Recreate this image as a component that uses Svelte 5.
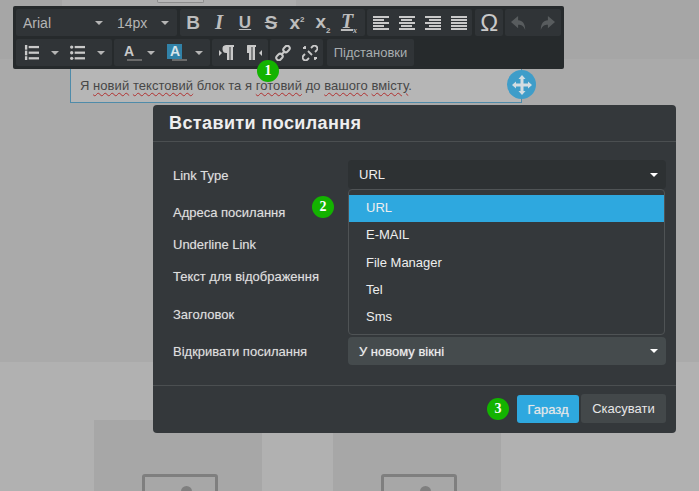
<script>
  const linkTypes = ['URL', 'E-MAIL', 'File Manager', 'Tel', 'Sms'];
  const labels = [
    ['Link Type', 30],
    ['Адреса посилання', 44],
    ['Underline Link', 20],
    ['Текст для відображення', 44],
    ['Заголовок', 32],
    ['Відкривати посилання', 42]
  ];
</script>

<div class="page">
  <section class="hero">
    <div class="topstrip">
      <div class="tophalf">
        <div class="topshot"></div>
      </div>
    </div>
    <div class="textblock">
      Я <u>новий</u> <u>текстовий</u> блок та я <u>готовий</u> до <u>вашого</u> <u>вмісту</u>.
    </div>
  </section>

  <section class="gallery">
    <div class="thumb"><span class="pic"><i></i></span></div>
    <div class="thumb"><span class="pic"><i></i></span></div>
  </section>

  <div class="toolbar">
    <div class="row">
      <div class="group">
        <span class="combo font">Arial<b class="caret"></b></span>
        <span class="combo size">14px<b class="caret"></b></span>
      </div>
      <div class="group tools">
        <span class="glyph bold">B</span>
        <span class="glyph ital">I</span>
        <span class="glyph under">U</span>
        <span class="glyph strike">S</span>
        <span class="glyph script">x<sup>2</sup></span>
        <span class="glyph script">x<sub>2</sub></span>
        <span class="glyph clear">T<sub>x</sub></span>
      </div>
      <div class="group aligns">
        {#each ['l', 'c', 'r', 'j'] as a}
          <span class="align {a}"><i></i><i></i><i></i><i></i><i></i></span>
        {/each}
      </div>
      <div class="group omega">Ω</div>
      <div class="group undo">
        <svg viewBox="0 0 20 18" width="18" height="16"><path d="M9 1 1 8l8 7v-4c4 0 6 1 8 6 0-7-3-11-8-11z" fill="#585c5e"/></svg>
        <svg viewBox="0 0 20 18" width="18" height="16"><path d="M11 1l8 7-8 7v-4c-4 0-6 1-8 6 0-7 3-11 8-11z" fill="#585c5e"/></svg>
      </div>
    </div>

    <div class="row low">
      <div class="group lists">
        <svg viewBox="0 0 16 16" width="15" height="15" fill="#c9c9c9"><rect x="5" y="1" width="11" height="2.4"/><rect x="5" y="7" width="11" height="2.4"/><rect x="5" y="13" width="11" height="2.4"/><rect x="1" y="0" width="2.5" height="5"/><rect x="1" y="6" width="2.5" height="5"/><rect x="1" y="12" width="2.5" height="4"/></svg>
        <b class="caret"></b>
        <svg viewBox="0 0 16 16" width="15" height="15" fill="#c9c9c9"><rect x="5" y="1" width="11" height="2.4"/><rect x="5" y="7" width="11" height="2.4"/><rect x="5" y="13" width="11" height="2.4"/><circle cx="1.8" cy="2.2" r="1.8"/><circle cx="1.8" cy="8.2" r="1.8"/><circle cx="1.8" cy="14.2" r="1.8"/></svg>
        <b class="caret"></b>
      </div>
      <div class="group colors">
        <span class="swatch">A</span>
        <b class="caret"></b>
        <span class="swatch blue">A</span>
        <b class="caret"></b>
      </div>
      <div class="group paras">
        <svg viewBox="0 0 15 15" width="15" height="15" fill="#c9c9c9"><path d="M0 5l3 3-3 3z"/><path d="M7 0h8v2h-1v13h-2.500V2h-1v13H8V8a4 4 0 0 1-1-8z"/></svg>
        <svg viewBox="0 0 15 15" width="15" height="15" fill="#c9c9c9"><path d="M1 0h8v2H8v13H5.500V2h-1v13H2V8a4 4 0 0 1-1-8z"/><path d="M15 5l-3 3 3 3z"/></svg>
      </div>
      <div class="group links">
        <svg viewBox="0 0 16 16" width="16" height="16" fill="none" stroke="#c9c9c9" stroke-width="2"><rect x="8" y="1.500" width="7" height="5" rx="2.500" transform="rotate(-45 11.500 4)"/><rect x="1" y="9.500" width="7" height="5" rx="2.500" transform="rotate(-45 4.500 12)"/><path d="M6 10l4-4"/></svg>
        <svg viewBox="0 0 16 16" width="16" height="16" fill="none" stroke="#c9c9c9" stroke-width="1.800"><path d="M9 3l1.500-1.500a2.500 2.500 0 0 1 4 4L13 7M7 13l-1.500 1.500a2.500 2.500 0 0 1-4-4L3 9M3 1v3M1 3h3M13 15v-3M15 13h-3M6 6l4 4"/></svg>
      </div>
      <div class="group subs">Підстановки</div>
    </div>
  </div>

  <div class="handle">
    <svg viewBox="0 0 20 20" width="20" height="20" fill="#d3dde2"><path d="M10 0l3.500 4H11.500v4.500H16V6.500l4 3.500-4 3.500v-2h-4.500V16h2L10 20l-3.500-4h2v-4.500H4v2L0 10l4-3.500v2h4.500V4h-2z"/></svg>
  </div>

  <div class="modal">
    <h3>Вставити посилання</h3>
    <div class="body">
      <div class="labels">
        {#each labels as [label, h]}
          <div class="lbl" style="height: {h}px">{label}</div>
        {/each}
      </div>
      <div class="controls">
        <div class="select dark">URL<b class="caret white"></b></div>
        <ul class="menu">
          {#each linkTypes as t, i}
            <li class:on={i === 0}>{t}</li>
          {/each}
        </ul>
        <div class="select open">У новому вікні<b class="caret white"></b></div>
      </div>
    </div>
    <div class="foot">
      <button class="ok">Гаразд</button>
      <button class="cancel">Скасувати</button>
    </div>
  </div>

  <span class="badge one">1</span>
  <span class="badge two">2</span>
  <span class="badge three">3</span>
</div>

<style>
  :global(body) {
    margin: 0;
    background: #b1b1b1;
  }

  .page {
    position: relative;
    width: 699px;
    height: 491px;
    overflow: hidden;
    font-family: "Liberation Sans", Arial, sans-serif;
    font-size: 13px;
  }

  .hero {
    height: 362px;
    background: #aaaaaa;
  }

  .topstrip {
    height: 59px;
    background: #a6a6a6;
  }

  .tophalf {
    width: 234px;
    height: 59px;
    margin-left: 62px;
    background: #adadad;
  }

  .topshot {
    width: 45px;
    height: 2px;
    margin-left: 95px;
    background: #b7b7b7;
    border: 1px solid #8c8c8c;
    border-top: 0;
    border-radius: 0 0 2px 2px;
  }

  .textblock {
    margin: 10px 0 0 70px;
    width: 452px;
    height: 34px;
    box-sizing: border-box;
    border: 1px solid #4f8ba9;
    border-top: 0;
    padding: 9px 9px 0;
    background: #b6b6b6;
    color: #474747;
    font-size: 13px;
    letter-spacing: 0.05px;
    line-height: 16px;
  }

  .textblock u {
    text-decoration: underline wavy #b03030 1px;
    text-underline-offset: 2px;
  }

  .gallery {
    display: flex;
    gap: 71px;
    padding: 58px 0 0 94px;
  }

  .thumb {
    width: 168px;
    height: 71px;
    background: #a7a7a7;
    display: flex;
    justify-content: center;
    padding-top: 54px;
    box-sizing: border-box;
  }

  .pic {
    width: 76px;
    height: 30px;
    margin-left: 3px;
    box-sizing: border-box;
    border: 3px solid #7f7f7f;
    border-radius: 3px;
    display: flex;
    justify-content: center;
  }

  .pic i {
    width: 11px;
    height: 11px;
    margin: 9px 0 0 14px;
    border-radius: 50%;
    background: #7f7f7f;
  }

  .toolbar {
    position: absolute;
    left: 13px;
    top: 6px;
    width: 551px;
    height: 63px;
    box-sizing: border-box;
    padding: 3px;
    background: #262a2c;
    border-radius: 2px;
    display: flex;
    flex-direction: column;
    gap: 3px;
    color: #c9c9c9;
  }

  .row {
    display: flex;
    gap: 2px;
    height: 27px;
  }

  .group {
    height: 27px;
    background: #303437;
    border-radius: 2px;
    display: flex;
    align-items: center;
  }

  .combo {
    display: flex;
    align-items: center;
    justify-content: space-between;
    font-size: 14px;
    box-sizing: border-box;
    padding-left: 7px;
    color: #b5b5b5;
  }

  .font { width: 94px; padding-right: 7px; }
  .size { width: 67px; padding-right: 8px; }

  .caret {
    display: block;
    flex: none;
    width: 0;
    height: 0;
    border: 4px solid transparent;
    border-top-color: #b5b5b5;
    border-bottom: 0;
  }

  .caret.white {
    border-top-color: #fff;
    border-width: 4px 4px 0;
  }

  .tools {
    width: 185px;
    margin-left: 1px;
  }

  .glyph {
    width: 26px;
    flex: none;
    text-align: center;
    font-size: 16px;
    font-weight: bold;
    color: #bdbdbd;
  }

  .bold { font-size: 19px; }
  .ital { font-family: "Liberation Serif", serif; font-style: italic; font-size: 21px; }
  .under { text-decoration: underline; font-size: 17px; }
  .strike { text-decoration: line-through; font-size: 19px; }
  .script { font-size: 19px; }
  .script sup, .script sub, .clear sub { font-size: 8px; }
  .clear { font-family: "Liberation Serif", serif; font-style: italic; font-size: 20px; text-decoration: underline; }

  .aligns {
    width: 106px;
    gap: 10px;
    padding-left: 6px;
    box-sizing: border-box;
  }

  .align {
    width: 16px;
    display: flex;
    flex-direction: column;
    gap: 1px;
  }

  .align i {
    display: block;
    height: 2px;
    background: #c9c9c9;
  }

  .align.l i:nth-child(even) { width: 70%; }
  .align.c i:nth-child(even) { width: 70%; align-self: center; }
  .align.r i:nth-child(even) { width: 70%; align-self: flex-end; }

  .omega {
    width: 28px;
    margin-left: 1px;
    justify-content: center;
    font-size: 24px;
  }

  .undo {
    width: 56px;
    justify-content: space-around;
  }

  .lists {
    width: 96px;
    box-sizing: border-box;
    padding: 0 7px 0 8px;
    justify-content: space-between;
  }

  .colors {
    width: 96px;
    box-sizing: border-box;
    padding-left: 9px;
  }

  .swatch {
    width: 21px;
    height: 17px;
    margin-right: 3px;
    font-size: 14px;
    font-weight: bold;
    line-height: 15px;
    text-indent: 1px;
    background: linear-gradient(#6a6a6a, #6a6a6a) 4px 100% / 15px 2px no-repeat;
  }

  .swatch.blue {
    margin: 0 7px 0 12px;
    text-indent: 3px;
    color: #d6e4ea;
    background:
      linear-gradient(#3182a8, #3182a8) left top / 15px 15px no-repeat,
      linear-gradient(#6a6a6a, #6a6a6a) 5px 100% / 15px 2px no-repeat;
  }

  .paras {
    width: 56px;
    justify-content: space-around;
  }

  .links {
    width: 53px;
    justify-content: space-around;
  }

  .subs {
    width: 87px;
    margin-left: 2px;
    justify-content: center;
    font-size: 13px;
    color: #a9adaf;
  }

  .handle {
    position: absolute;
    left: 507px;
    top: 70px;
    width: 29px;
    height: 29px;
    border-radius: 50%;
    background: #3f9dc9;
    display: flex;
    align-items: center;
    justify-content: center;
  }

  .modal {
    position: absolute;
    left: 153px;
    top: 105px;
    width: 523px;
    height: 328px;
    box-sizing: border-box;
    background: #34383b;
    border-radius: 4px;
    color: #e0e0e0;
  }

  h3 {
    margin: 0;
    height: 37px;
    box-sizing: border-box;
    padding: 8px 16px 0;
    font-size: 18px;
    letter-spacing: 0.4px;
    line-height: 21px;
    font-weight: bold;
    color: #eee;
    border-bottom: 1px solid #4b4f51;
  }

  .body {
    display: flex;
    height: 244px;
    border-bottom: 1px solid #4b4f51;
    box-sizing: border-box;
    padding: 18px 10px 0 20px;
  }

  .labels {
    width: 175px;
  }

  .lbl {
    display: flex;
    align-items: center;
    color: #dedede;
    text-shadow: 0 0 1px rgba(255, 255, 255, 0.35);
  }

  .controls {
    position: relative;
    width: 318px;
  }

  .select {
    height: 29px;
    box-sizing: border-box;
    padding: 0 8px 0 11px;
    display: flex;
    align-items: center;
    justify-content: space-between;
    border-radius: 4px;
    color: #eee;
  }

  .dark {
    background: #2d3133;
  }

  .menu {
    list-style: none;
    margin: 0 1px 2px 0;
    padding: 5px 0 5px;
    height: 146px;
    box-sizing: border-box;
    border: 1px solid #4f5355;
    border-radius: 4px;
    background: #34383b;
  }

  .menu li {
    height: 27.300px;
    line-height: 26px;
    padding-left: 17px;
    color: #eee;
  }

  .menu li.on {
    background: #2ea8df;
  }

  .open {
    background: #454b4d;
    height: 28px;
    text-shadow: 0 0 1px rgba(255, 255, 255, 0.5);
  }

  .foot {
    display: flex;
    justify-content: flex-end;
    align-items: flex-start;
    gap: 2px;
    padding: 9px 10px 0 0;
  }

  button {
    border: 0;
    border-radius: 3px;
    font: inherit;
    height: 28px;
    padding: 0;
    color: #e6e6e6;
  }

  .ok {
    width: 62px;
    background: #2ea8df;
    text-shadow: 0 0 1px rgba(255, 255, 255, 0.5);
  }

  .cancel {
    width: 85px;
    height: 29px;
    margin-top: -1px;
    background: #43484a;
  }

  .badge {
    position: absolute;
    width: 22px;
    height: 22px;
    border-radius: 50%;
    background: #13b300;
    color: #fff;
    font-family: "Liberation Serif", serif;
    font-weight: bold;
    font-size: 14px;
    line-height: 22px;
    text-align: center;
  }

  .one { left: 257px; top: 60px; }
  .two { left: 312px; top: 196px; }
  .three { left: 487px; top: 398px; }
</style>
